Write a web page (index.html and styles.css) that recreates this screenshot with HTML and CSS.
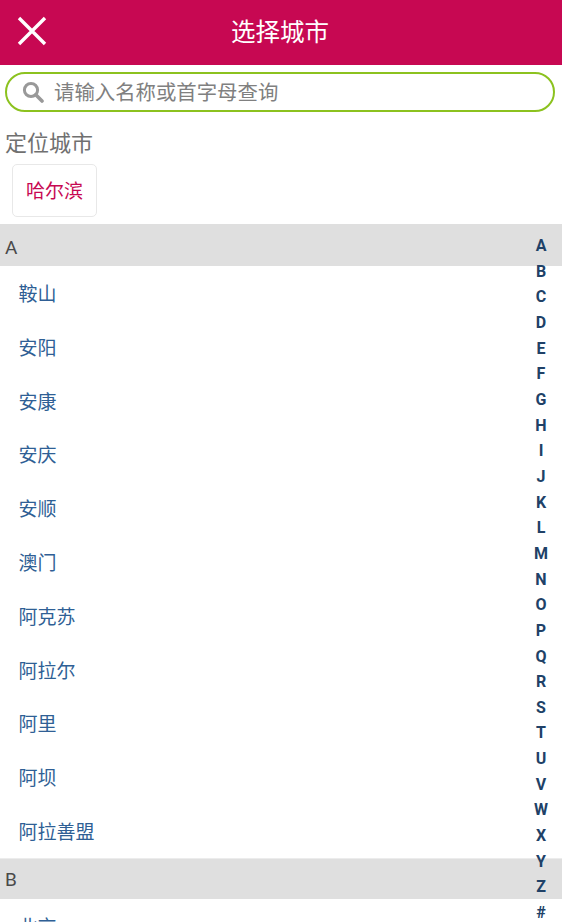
FILE: index.html
```html
<!DOCTYPE html>
<html lang="zh-CN">
<head>
<meta charset="utf-8">
<title>选择城市</title>
<link rel="stylesheet" href="styles.css">
</head>
<body>
<header class="topbar">
  <svg class="close" width="30" height="30" viewBox="0 0 30 30"><path d="M2 2 L28 28 M28 2 L2 28" stroke="#fff" stroke-width="3.4" fill="none"/></svg>
  <h1 class="title">选择城市</h1>
</header>
<div class="search">
  <svg class="search-icon" width="22" height="22" viewBox="0 0 22 22"><circle cx="9" cy="9" r="6.6" fill="none" stroke="#999" stroke-width="3"/><path d="M13.8 13.8 L20 20" stroke="#999" stroke-width="3.6" stroke-linecap="round"/></svg>
  <span class="placeholder">请输入名称或首字母查询</span>
</div>
<h2 class="located-title">定位城市</h2>
<div class="located-wrap"><span class="chip">哈尔滨</span></div>
<main class="list">
  <div class="group">A</div>
  <a class="city">鞍山</a>
  <a class="city">安阳</a>
  <a class="city">安康</a>
  <a class="city">安庆</a>
  <a class="city">安顺</a>
  <a class="city">澳门</a>
  <a class="city">阿克苏</a>
  <a class="city">阿拉尔</a>
  <a class="city">阿里</a>
  <a class="city">阿坝</a>
  <a class="city">阿拉善盟</a>
  <div class="group group-b">B</div>
  <a class="city">北京</a>
</main>
<nav class="index">
  <span>A</span><span>B</span><span>C</span><span>D</span><span>E</span><span>F</span><span>G</span><span>H</span><span>I</span><span>J</span><span>K</span><span>L</span><span>M</span><span>N</span><span>O</span><span>P</span><span>Q</span><span>R</span><span>S</span><span>T</span><span>U</span><span>V</span><span>W</span><span>X</span><span>Y</span><span>Z</span><span>#</span>
</nav>
</body>
</html>
```
FILE: styles.css
```css
* { box-sizing: border-box; }
html, body { margin: 0; padding: 0; }
body {
  position: relative;
  width: 562px;
  height: 922px;
  overflow: hidden;
  background: #fff;
  font-family: Roboto, "Noto Sans CJK SC", sans-serif;
}
.topbar {
  height: 65px;
  background: #c70852;
  display: flex;
  align-items: center;
  justify-content: center;
  position: relative;
}
.close { position: absolute; left: 17px; top: 16px; }
.title {
  margin: 1px 2px 0 0;
  color: #fff;
  font-size: 24.5px;
  font-weight: 400;
  line-height: 1;
}
.search {
  margin: 7px 7px 0 5px;
  height: 40px;
  border: 2px solid #8cc21f;
  border-radius: 20px;
  display: flex;
  align-items: center;
  padding-left: 15px;
  gap: 10px;
}
.search-icon { flex: none; }
.placeholder {
  color: #808080;
  font-size: 20.4px;
  line-height: 1;
  position: relative;
  top: 1px;
}
.located-title {
  margin: 18px 0 0 5px;
  font-size: 22px;
  line-height: 28px;
  font-weight: 400;
  color: #707070;
}
.located-wrap { padding: 6px 0 0 12px; height: 66px; }
.chip {
  display: inline-flex;
  width: 85px;
  height: 53px;
  padding-bottom: 3px;
  align-items: center;
  justify-content: center;
  border: 1px solid #e8e8e8;
  border-radius: 5px;
  color: #c70852;
  font-size: 19px;
}
.list { display: flex; flex-direction: column; }
.group {
  height: 42px;
  background: #dfdfdf;
  padding-left: 5px;
  font-size: 19px;
  line-height: 47px;
  color: #4a4a4a;
}
.group-b { height: 41px; line-height: 42px; border-top: 1px solid #ececec; }
.city {
  height: 53.8px;
  flex: none;
  padding-left: 18.5px;
  font-size: 19px;
  line-height: 58px;
  color: #2f5f95;
}
.index {
  position: absolute;
  top: 233px;
  right: 0;
  width: 42px;
  display: flex;
  flex-direction: column;
  align-items: center;
}
.index span {
  height: 25.67px;
  line-height: 25.67px;
  font-size: 16px;
  font-weight: 700;
  color: #204167;
}
```
